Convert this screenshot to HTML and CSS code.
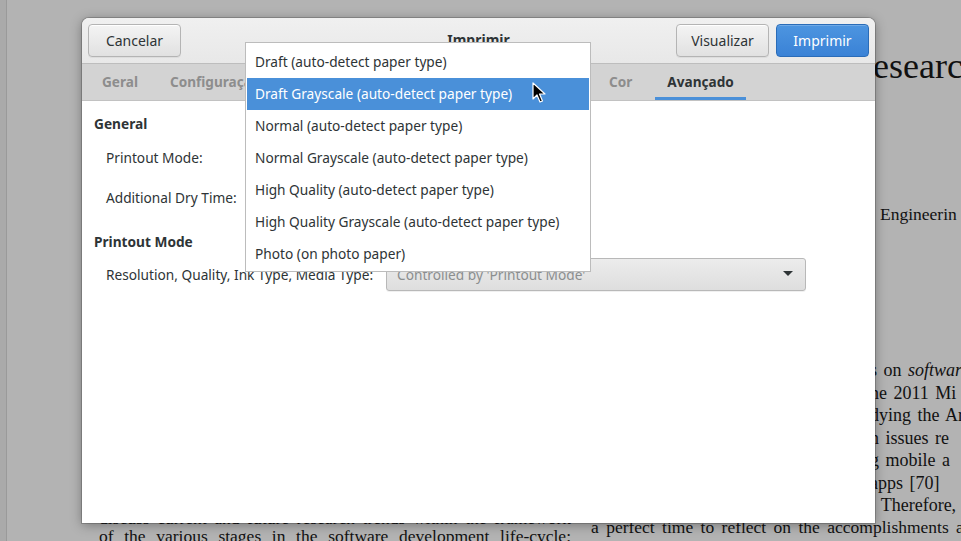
FILE: index.html
```html
<!DOCTYPE html>
<html lang="pt">
<head>
<meta charset="utf-8">
<title>Imprimir</title>
<link rel="stylesheet" href="styles.css">
</head>
<body>
<div class="desktop">
  <div class="doc-strip"></div>
  <div class="doc-title">Researc</div>
  <div class="doc-sub">Engineerin</div>
  <div class="doc-right">
    <p>s on <i>softwar</i></p>
    <p>ne 2011 Mi</p>
    <p>dying the Ar</p>
    <p>n issues re</p>
    <p>g mobile a</p>
    <p>apps [70]</p>
    <p>. Therefore,</p>
  </div>
  <div class="doc-left">
    <p class="just">discuss current and future research trends within the framework</p>
    <p class="just">of the various stages in the software development life-cycle:</p>
  </div>
  <div class="doc-right2">a perfect time to reflect on the accomplishments and</div>

  <div class="dialog">
    <header class="headerbar">
      <button class="btn">Cancelar</button>
      <div class="title">Imprimir</div>
      <div class="actions">
        <button class="btn">Visualizar</button>
        <button class="btn btn-primary">Imprimir</button>
      </div>
    </header>
    <nav class="tabs">
      <span class="tab">Geral</span>
      <span class="tab">Configuração de página</span>
      <span class="tab">Trabalho</span>
      <span class="tab">Qualidade</span>
      <span class="tab tab-cor">Cor</span>
      <span class="tab active">Avançado</span>
    </nav>
    <main class="content">
      <h3 class="section">General</h3>
      <div class="row row-first"><span class="label">Printout Mode:</span></div>
      <div class="row"><span class="label">Additional Dry Time:</span></div>
      <h3 class="section sec2">Printout Mode</h3>
      <div class="row combo-row">
        <span class="label">Resolution, Quality, Ink Type, Media Type:</span>
        <div class="combo">
          <span>Controlled by 'Printout Mode'</span>
          <svg class="arrow" width="10" height="6" viewBox="0 0 10 6"><path d="M0 0H10L5 5Z" fill="#2e3436"/></svg>
        </div>
      </div>
    </main>
  </div>

  <ul class="menu">
    <li>Draft (auto-detect paper type)</li>
    <li class="sel">Draft Grayscale (auto-detect paper type)</li>
    <li>Normal (auto-detect paper type)</li>
    <li>Normal Grayscale (auto-detect paper type)</li>
    <li>High Quality (auto-detect paper type)</li>
    <li>High Quality Grayscale (auto-detect paper type)</li>
    <li>Photo (on photo paper)</li>
  </ul>

  <svg class="cursor" width="14" height="22" viewBox="0 0 14 22">
    <path d="M1 1V17L5 13L8 20L10.5 19L7.5 12H13Z" fill="#000" stroke="#fff" stroke-width="1.2" stroke-linejoin="round"/>
  </svg>
</div>
</body>
</html>
```

FILE: styles.css
```css
* { box-sizing: border-box; }
html, body { margin: 0; padding: 0; }
body {
  width: 961px;
  height: 541px;
  overflow: hidden;
  background: #b2b2b2;
  font-family: "Noto Sans", "DejaVu Sans", sans-serif;
}
.desktop {
  position: relative;
  width: 961px;
  height: 541px;
  overflow: hidden;
  background: #b3b3b3;
}
.doc-strip {
  position: absolute;
  left: 0; top: 0;
  width: 7px; height: 541px;
  background: #aaaaaa;
  border-right: 1px solid #9a9a9a;
}
.doc-title, .doc-sub, .doc-right, .doc-left, .doc-right2 {
  position: absolute;
  font-family: "Liberation Serif", "Times New Roman", serif;
  color: #111;
  margin: 0;
  white-space: nowrap;
}
.doc-title { left: 849px; top: 46px; font-size: 36px; line-height: 40px; }
.doc-sub { left: 880px; top: 203px; font-size: 17.5px; line-height: 22px; }
.doc-right { left: 870px; top: 359px; font-size: 18px; line-height: 22.5px; word-spacing: 2px; }
.doc-right p { margin: 0; }
.doc-left { left: 99px; top: 509px; width: 472px; font-size: 17.5px; line-height: 18px; }
.doc-left p { margin: 0; white-space: normal; }
.just { text-align: justify; text-align-last: justify; }
.doc-right2 { left: 591px; top: 516px; font-size: 17.5px; line-height: 22px; word-spacing: 3px; }

.dialog {
  position: absolute;
  left: 82px; top: 18px;
  width: 793px; height: 505px;
  background: #fff;
  border-radius: 7px 7px 0 0;
  box-shadow: 0 2px 12px rgba(0,0,0,0.35), 0 0 0 1px rgba(0,0,0,0.18);
  display: flex;
  flex-direction: column;
  overflow: hidden;
}
.headerbar {
  height: 46px;
  flex: none;
  background: linear-gradient(#f0f0f0, #e8e8e8);
  border-bottom: 1px solid #bdbdbd;
  display: flex;
  align-items: center;
  padding: 0 6px;
  position: relative;
}
.title {
  position: absolute;
  left: 0; right: 0; top: 12px;
  text-align: center;
  font-weight: bold;
  font-size: 14px;
  color: #2e3436;
  pointer-events: none;
}
.actions { margin-left: auto; display: flex; gap: 7px; }
.btn {
  height: 33px;
  width: 93px;
  font-family: inherit;
  font-size: 14px;
  color: #2e3436;
  background: linear-gradient(#f4f4f4, #e1e1e1);
  border: 1px solid #b4b4b4;
  border-radius: 4px;
  box-shadow: inset 0 1px #fff, 0 1px rgba(0,0,0,0.05);
  padding: 0;
}
.btn-primary {
  color: #fff;
  background: linear-gradient(#4d95e0, #3a82d6);
  border-color: #2a6cb8;
  box-shadow: inset 0 1px rgba(255,255,255,0.2);
}
.tabs {
  height: 37px;
  flex: none;
  background: #d3d3d3;
  border-bottom: 1px solid #c2c2c2;
  display: flex;
  align-items: stretch;
  padding-left: 8px;
  gap: 8px;
}
.tab {
  font-size: 13.6px;
  font-weight: bold;
  color: #8d8d8d;
  padding: 2px 12px 0;
  display: flex;
  align-items: center;
  white-space: nowrap;
  border-bottom: 3px solid transparent;
}
.tab-cor { margin-left: 54px; }
.tab.active { color: #2e3436; border-bottom-color: #4a90d9; margin-left: 3px; }
.content {
  flex: 1;
  padding: 14px 12px;
  color: #2e3436;
  font-size: 13.7px;
}
.section { margin: 0; font-size: 13.7px; font-weight: bold; color: #2e3436; line-height: 18px; }
.sec2 { margin-top: 16px; }
.row { display: flex; align-items: center; padding-left: 12px; height: 40px; }
.row-first { margin-top: 4px; }
.combo-row { height: 34px; margin-top: 6px; }
.label { white-space: nowrap; flex: none; }
.combo {
  margin-left: auto;
  margin-right: 57px;
  width: 420px;
  height: 33px;
  border: 1px solid #b8b8b8;
  border-radius: 3px;
  background: linear-gradient(#ececec, #dedede);
  display: flex;
  align-items: center;
  padding: 0 10px;
  color: #8b8e8f;
  box-shadow: 0 1px rgba(0,0,0,0.06);
}
.combo .arrow { margin-left: auto; margin-right: 2px; }

.menu {
  position: absolute;
  left: 245px; top: 42px;
  width: 346px; height: 230px;
  margin: 0;
  padding: 3px 1px 0;
  list-style: none;
  background: #fff;
  border: 1px solid #bcbcbc;
  font-size: 13.7px;
  color: #2e3436;
}
.menu li {
  height: 32px;
  line-height: 31px;
  padding-left: 8px;
  white-space: nowrap;
}
.menu li.sel { background: #4a90d9; color: #fff; }
.cursor { position: absolute; left: 532px; top: 82px; }
```
